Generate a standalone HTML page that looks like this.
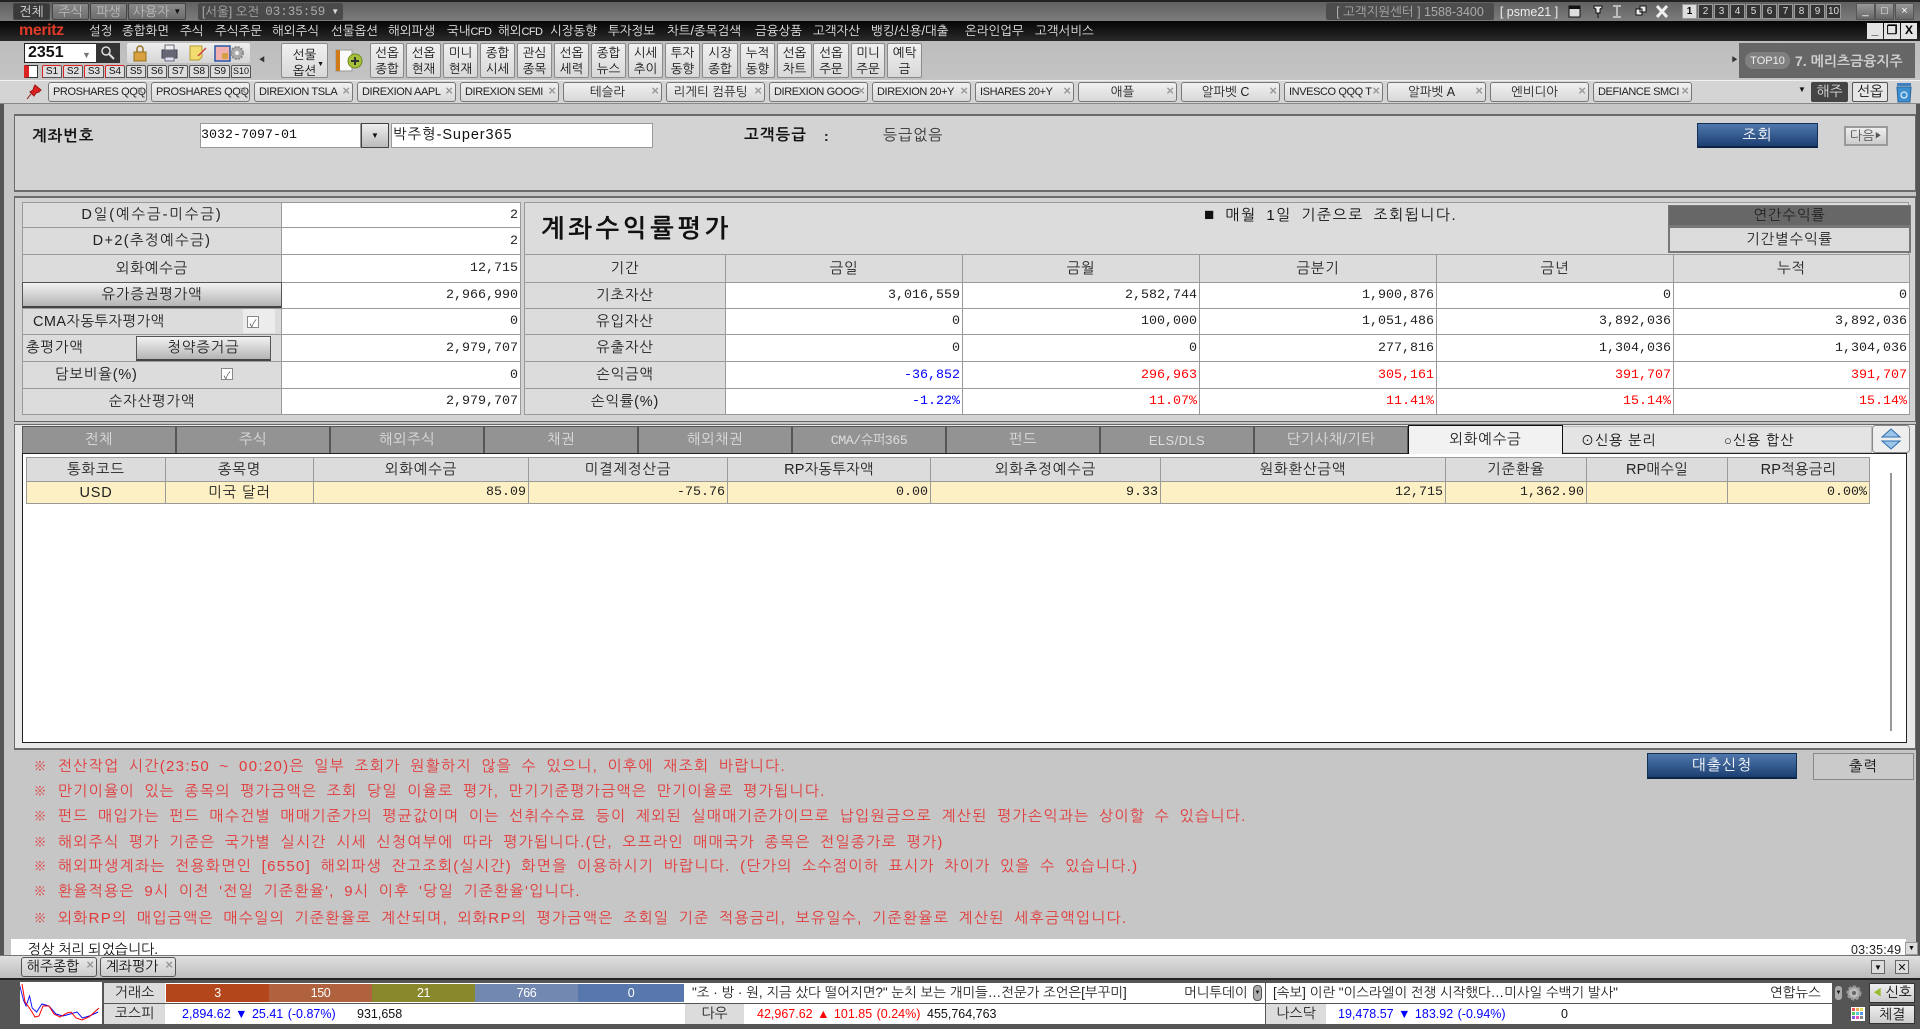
<!DOCTYPE html>
<html lang="ko"><head><meta charset="utf-8"><title>meritz</title>
<style>
*{box-sizing:border-box}
html,body{margin:0;padding:0}
body{width:1920px;height:1029px;overflow:hidden;position:relative;background:#c6c6c6;color:#111;font:13px "Liberation Sans","NanumGothic","Noto Sans CJK KR",sans-serif}
div{position:absolute;white-space:nowrap}
.c{display:flex;align-items:center;justify-content:center}
.m{font-family:"Liberation Mono","NanumGothic","Noto Sans CJK KR",monospace;font-size:13.33px}
.tp{top:3px;height:17px;background:linear-gradient(#8a8a8a,#6d6d6d);border:1px solid #444;border-radius:2px;color:#bbb;font-size:13px}
.mn{top:21px;height:20px;line-height:20px;color:#e6e6e6;font-size:12.5px}
.mn span{font-size:11px;letter-spacing:-.6px}
.tb{top:43px;height:35px;background:linear-gradient(#f0f0f0,#d8d8d8);border:1px solid #8a8a8a;border-radius:2px;text-align:center;font-size:12.5px;line-height:16px;padding-top:1px;color:#111}
.s{top:65px;width:20px;height:13px;background:#ddd;border:1px solid #555;border-radius:2px 2px 0 0;font-size:10px;line-height:11px;text-align:center}
.s.r{border-color:#d22 #555 #555 #d22;border-top:1px solid #d22}
.bk{top:82px;width:99px;height:20px;background:linear-gradient(#f1f1f1,#d8d8d8);border:1px solid #777;border-radius:3px;line-height:18px;font-size:11px;letter-spacing:-.4px;padding-left:4px;color:#222}
.bk.k{text-align:center;padding-right:14px;font-size:12.5px;letter-spacing:0}
.bk:after,.x:after{content:"×";position:absolute;right:2px;top:-1px;color:#999;font-size:13px;font-weight:bold;letter-spacing:0}
.num{top:4px;width:15px;height:15px;background:#333;border:1px solid #999;color:#ddd;font-size:10px;text-align:center;line-height:13px}
.win{top:3px;width:19px;height:17px;background:linear-gradient(#999,#666);border:1px solid #555;color:#fff;font-size:11px;text-align:center;line-height:14px}
.mdi{top:23px;width:16px;height:16px;background:#e4e4e4;color:#000;font-weight:bold;font-size:12px;text-align:center;line-height:15px}
table{position:absolute;border-collapse:collapse;table-layout:fixed;font-size:14.5px}
td{border:1px solid #9a9a9a;padding:0 2px;white-space:nowrap;overflow:hidden}
td.l{background:#dcdcdc;text-align:center;color:#222;letter-spacing:.8px}
td.v{background:#fff;text-align:right;font-family:"Liberation Mono",monospace;font-size:13.33px;color:#222}
.red{color:#f00!important}.blu{color:#00f!important}
.btn{background:linear-gradient(#f2f2f2,#b4b4b4);border:1px solid #555;border-bottom:2px solid #444;display:flex;align-items:center;justify-content:center;font-size:14.5px;color:#222;letter-spacing:.8px}
.blue{background:linear-gradient(#5078ad,#1c3f72);border:1px solid #123058;border-bottom:2px solid #0c2446;color:#fff;display:flex;align-items:center;justify-content:center;font-size:15px;letter-spacing:1px}
.t{top:426px;width:154px;height:27px;background:#939393;border:1px solid #555;border-bottom:none;color:#ddd;font-size:14.5px;letter-spacing:.4px;display:flex;align-items:center;justify-content:center}
.g td{font-size:14.5px;letter-spacing:.8px}
.g td.h{background:#dcdcdc;text-align:center;color:#222}
.g td.y{background:#fdf0c4;color:#222}
.g td.r{text-align:right;font-family:"Liberation Mono",monospace;font-size:13.33px;letter-spacing:0}
.g td.ce{text-align:center}
.nt{left:33px;color:#e23a3a;font-size:15px;letter-spacing:1.3px;height:20px;line-height:20px;word-spacing:4px}
.sg{top:984px;height:18px;color:#fff;font-size:12.5px;letter-spacing:-.4px;display:flex;align-items:center;justify-content:center}
.lb{background:#dcdcdc;display:flex;align-items:center;justify-content:center;font-size:14px;color:#222}
.vl{font-size:12.5px;line-height:20px;height:20px;word-spacing:1px}
.nw{font-size:13.5px;line-height:20px;height:20px;color:#222;top:983px}
</style></head><body>

<!-- title bar -->
<div style="left:0;top:0;width:1920px;height:21px;background:linear-gradient(#5e5e5e,#7c7c7c)"></div>
<div style="left:0;top:0;width:1920px;height:2px;background:#222"></div>
<div class="tp c" style="left:13px;width:37px;background:#3a3a3a;color:#ddd">전체</div>
<div class="tp c" style="left:52px;width:37px">주식</div>
<div class="tp c" style="left:90px;width:37px">파생</div>
<div class="tp c" style="left:128px;width:58px">사용자 <span style="font-size:8px;margin-left:4px;color:#111">▼</span></div>
<div class="c" style="left:198px;top:3px;width:145px;height:17px;background:#4a4a4a;border-radius:2px;color:#aaa;font-size:12.5px">[서울] 오전 <span class="m" style="margin:0 6px;font-size:12.5px">03:35:59</span><span style="font-size:8px;color:#ddd">▼</span></div>
<div class="c" style="left:1326px;top:3px;width:168px;height:17px;background:#4d4d4d;border-radius:2px;color:#aaa;font-size:12.5px">[ 고객지원센터 ] 1588-3400</div>
<div class="c" style="left:1498px;top:3px;width:62px;height:17px;color:#eee;font-size:12.5px">[ psme21 ]</div>
<svg style="position:absolute;left:1566px;top:4px" width="102" height="15" viewBox="0 0 102 15"><rect x="3" y="2" width="11" height="11" fill="#ddd" stroke="#111"/><rect x="3" y="2" width="11" height="3" fill="#111"/><path d="M28 2h8v2l-2 1v4h-4v-4l-2-1zM32 9v5" fill="#eee" stroke="#111"/><path d="M47 2h8M47 13h8M51 2v11" stroke="#bbb" stroke-width="2" fill="none"/><path d="M70 5h6v6h-6zM74 2h6v6h-6z" fill="#eee" stroke="#111"/><path d="M91 2l10 11M101 2l-10 11" stroke="#eee" stroke-width="3"/></svg>
<div class="num" style="left:1682px;background:#ddd;color:#000;font-weight:bold">1</div><div class="num" style="left:1698px">2</div><div class="num" style="left:1714px">3</div><div class="num" style="left:1730px">4</div><div class="num" style="left:1746px">5</div><div class="num" style="left:1762px">6</div><div class="num" style="left:1778px">7</div><div class="num" style="left:1794px">8</div><div class="num" style="left:1810px">9</div><div class="num" style="left:1826px">10</div>
<div class="win" style="left:1856px">_</div><div class="win" style="left:1875px">□</div><div class="win" style="left:1895px">×</div>

<!-- menu -->
<div style="left:0;top:21px;width:1920px;height:20px;background:linear-gradient(#050505,#2a2a2a)"></div>
<div style="left:19px;top:20px;height:20px;line-height:21px;color:#e03a28;font:bold 16px/21px 'Liberation Sans',sans-serif;letter-spacing:-.4px">meritz</div>
<div class="mn" style="left:89px">설정</div><div class="mn" style="left:122px">종합화면</div><div class="mn" style="left:180px">주식</div><div class="mn" style="left:215px">주식주문</div><div class="mn" style="left:272px">해외주식</div><div class="mn" style="left:331px">선물옵션</div><div class="mn" style="left:388px">해외파생</div><div class="mn" style="left:447px">국내<span>CFD</span></div><div class="mn" style="left:498px">해외<span>CFD</span></div><div class="mn" style="left:550px">시장동향</div><div class="mn" style="left:608px">투자정보</div><div class="mn" style="left:667px">차트/종목검색</div><div class="mn" style="left:755px">금융상품</div><div class="mn" style="left:813px">고객자산</div><div class="mn" style="left:871px">뱅킹/신용/대출</div><div class="mn" style="left:965px">온라인업무</div><div class="mn" style="left:1035px">고객서비스</div>
<div class="mdi" style="left:1867px">_</div><div class="mdi" style="left:1884px">❐</div><div class="mdi" style="left:1901px">X</div>

<!-- toolbar -->
<div style="left:0;top:41px;width:1920px;height:39px;background:linear-gradient(#bdbdbd,#c4c4c4)"></div>
<div style="left:24px;top:43px;width:96px;height:20px;background:#fff;border:1px solid #222;font:bold 16px/18px 'Liberation Sans',sans-serif;padding-left:3px">2351</div>
<div style="left:82px;top:50px;color:#777;font-size:9px">▼</div>
<div style="left:96px;top:43px;width:24px;height:20px;background:#333"></div>
<svg style="position:absolute;left:100px;top:45px" width="16" height="16" viewBox="0 0 16 16"><circle cx="6" cy="6" r="4" fill="none" stroke="#ddd" stroke-width="1.5"/><path d="M9 9l5 5" stroke="#ddd" stroke-width="2"/></svg>
<div style="left:127px;top:43px;width:123px;height:20px;background:linear-gradient(#eee,#d5d5d5);border-radius:2px"></div>
<svg style="position:absolute;left:132px;top:44px" width="112" height="18" viewBox="0 0 112 18"><rect x="2" y="8" width="12" height="9" fill="#d8a040" stroke="#96701c"/><path d="M5 8V5a3 3 0 0 1 6 0v3" fill="none" stroke="#96701c" stroke-width="1.5"/><rect x="30" y="6" width="15" height="8" fill="#667" stroke="#445"/><rect x="33" y="1" width="9" height="5" fill="#eee" stroke="#667"/><rect x="33" y="13" width="9" height="4" fill="#dde" stroke="#667"/><path d="M58 2h12v11l-3 3h-9z" fill="#f1dc70" stroke="#b69a30"/><path d="M66 12l8-8" stroke="#c44" stroke-width="1.5"/><rect x="83" y="2" width="15" height="15" fill="#f0b0b0" stroke="#2458a8" stroke-width="1.5"/><rect x="90" y="9" width="6" height="6" fill="#d8a040"/><circle cx="105" cy="9" r="6" fill="#aaa" stroke="#888" stroke-dasharray="2 1.2" stroke-width="2"/><circle cx="105" cy="9" r="2" fill="#eee"/></svg>
<div style="left:24px;top:65px;width:14px;height:13px;background:#fff;border:1px solid #333;border-left:5px solid #d22"></div>
<div class="s r" style="left:42px">S1</div><div class="s r" style="left:63px">S2</div><div class="s r" style="left:84px">S3</div><div class="s r" style="left:105px">S4</div><div class="s" style="left:126px">S5</div><div class="s" style="left:147px">S6</div><div class="s" style="left:168px">S7</div><div class="s" style="left:189px">S8</div><div class="s" style="left:210px">S9</div><div class="s" style="left:231px;font-size:9px">S10</div>
<div style="left:258px;top:55px;font-size:8px;color:#333">◀</div>
<div class="tb" style="left:281px;width:47px;padding-top:3px">선물<br>옵션<span style="position:absolute;right:3px;top:13px;font-size:7px">▼</span></div>
<svg style="position:absolute;left:335px;top:49px" width="28" height="24" viewBox="0 0 28 24"><path d="M1 1h16v21H1z" fill="#fafafa" stroke="#999"/><rect x="1" y="1" width="4" height="21" fill="#d07a18"/><circle cx="20" cy="12" r="7" fill="#a5c23a" stroke="#6f8a1c"/><path d="M20 8v8M16 12h8" stroke="#333" stroke-width="2"/></svg>
<div class="tb" style="left:370px;width:34px">선옵<br>종합</div><div class="tb" style="left:406px;width:35px">선옵<br>현재</div><div class="tb" style="left:443px;width:35px">미니<br>현재</div><div class="tb" style="left:480px;width:35px">종합<br>시세</div><div class="tb" style="left:517px;width:35px">관심<br>종목</div><div class="tb" style="left:554px;width:35px">선옵<br>세력</div><div class="tb" style="left:591px;width:35px">종합<br>뉴스</div><div class="tb" style="left:628px;width:35px">시세<br>추이</div><div class="tb" style="left:665px;width:35px">투자<br>동향</div><div class="tb" style="left:702px;width:36px">시장<br>종합</div><div class="tb" style="left:740px;width:35px">누적<br>동향</div><div class="tb" style="left:777px;width:35px">선옵<br>차트</div><div class="tb" style="left:813px;width:36px">선옵<br>주문</div><div class="tb" style="left:851px;width:34px">미니<br>주문</div><div class="tb" style="left:887px;width:35px">예탁<br>금</div>
<div style="left:1731px;top:55px;font-size:8px;color:#333">▶</div>
<div style="left:1739px;top:43px;width:176px;height:35px;background:#666"></div>
<div class="c" style="left:1745px;top:52px;width:45px;height:17px;background:#808080;border-radius:8px;color:#eee;font-size:11px">TOP10</div>
<div style="left:1795px;top:51px;height:20px;line-height:20px;color:#d0d0d0;font-weight:bold;font-size:14px">7. 메리츠금융지주</div>

<!-- bookmarks -->
<div style="left:0;top:80px;width:1920px;height:24px;background:#d4d4d4;border-top:1px solid #f0f0f0;border-bottom:1px solid #888"></div>
<svg style="position:absolute;left:26px;top:84px" width="16" height="16" viewBox="0 0 16 16"><path d="M9 1l6 5-2 2-3 1-2 3-4-4 3-2 1-3zM5 10l-4 5" fill="#d22" stroke="#911"/></svg>
<div class="bk" style="left:48px">PROSHARES QQQ</div><div class="bk" style="left:151px">PROSHARES QQQ</div><div class="bk" style="left:254px">DIREXION TSLA</div><div class="bk" style="left:357px">DIREXION AAPL</div><div class="bk" style="left:460px">DIREXION SEMI</div><div class="bk k" style="left:563px">테슬라</div><div class="bk k" style="left:666px">리게티 컴퓨팅</div><div class="bk" style="left:769px">DIREXION GOOG</div><div class="bk" style="left:872px">DIREXION 20+Y</div><div class="bk" style="left:975px">ISHARES 20+Y</div><div class="bk k" style="left:1078px">애플</div><div class="bk k" style="left:1181px">알파벳 C</div><div class="bk" style="left:1284px">INVESCO QQQ T</div><div class="bk k" style="left:1387px">알파벳 A</div><div class="bk k" style="left:1490px">엔비디아</div><div class="bk" style="left:1593px">DEFIANCE SMCI</div>
<div style="left:1798px;top:85px;font-size:8px">▼</div>
<div class="c" style="left:1811px;top:82px;width:37px;height:20px;background:#444;color:#ddd;font-size:14px;border-radius:2px">해주</div>
<div class="c" style="left:1852px;top:82px;width:36px;height:20px;background:#e6e6e6;border:1px solid #555;font-size:14px;border-radius:2px">선옵</div>
<svg style="position:absolute;left:1894px;top:82px" width="24" height="21" viewBox="0 0 24 21"><rect x="3" y="1" width="14" height="3" fill="#3d7fc0"/><path d="M3 5h14l-1 15H4z" fill="#3d8fd0" stroke="#26649a"/><circle cx="10" cy="13" r="3" fill="none" stroke="#fff"/></svg>

<!-- frame -->
<div style="left:0;top:104px;width:4px;height:874px;background:#555"></div>
<div style="right:0;top:104px;width:4px;height:874px;background:#555"></div>

<!-- panel 1 -->
<div style="left:14px;top:114px;width:1902px;height:78px;background:#d3d3d3;border:2px solid #6a6a6a;border-width:2px 1px 2px 1px"></div>
<div style="left:32px;top:127px;height:20px;line-height:20px;font-weight:bold;font-size:15.5px;letter-spacing:1px">계좌번호</div>
<div class="m" style="left:200px;top:123px;width:161px;height:25px;background:#fff;border:1px solid #999;line-height:23px">3032-7097-01</div>
<div class="c" style="left:361px;top:123px;width:28px;height:25px;background:linear-gradient(#eee,#bbb);border:1px solid #444;font-size:8px">▼</div>
<div style="left:391px;top:123px;width:262px;height:25px;background:#fff;border:1px solid #999;line-height:23px;font-size:14.5px;padding-left:1px;letter-spacing:.9px">박주형-Super365</div>
<div style="left:744px;top:126px;height:20px;line-height:20px;font-weight:bold;font-size:15.5px;letter-spacing:1.2px">고객등급</div>
<div style="left:824px;top:126px;height:20px;line-height:20px;font-weight:bold;font-size:14px">:</div>
<div style="left:883px;top:126px;height:20px;line-height:20px;font-size:15px;letter-spacing:1px;color:#333">등급없음</div>
<div class="blue" style="left:1697px;top:123px;width:121px;height:25px">조회</div>
<div class="c" style="left:1844px;top:126px;width:44px;height:20px;background:linear-gradient(#eee,#ccc);border:2px solid #999;font-size:13px;color:#555">다음<span style="font-size:8px">▶</span></div>

<!-- panel 2 -->
<div style="left:14px;top:196px;width:1902px;height:226px;background:#d3d3d3;border:1px solid #6a6a6a;border-top-width:2px"></div>
<table style="left:22px;top:202px;width:498px"><colgroup><col style="width:259px"><col style="width:239px"></colgroup>
<tr style="height:25px"><td class="l" style="letter-spacing:1.9px">D일(예수금-미수금)</td><td class="v">2</td></tr>
<tr style="height:27px"><td class="l" style="letter-spacing:1.4px">D+2(추정예수금)</td><td class="v">2</td></tr>
<tr style="height:28px"><td class="l">외화예수금</td><td class="v">12,715</td></tr>
<tr style="height:26px"><td class="l"></td><td class="v">2,966,990</td></tr>
<tr style="height:26px"><td class="l" style="text-align:left;padding-left:10px;letter-spacing:.4px">CMA자동투자평가액</td><td class="v">0</td></tr>
<tr style="height:27px"><td class="l" style="text-align:left;padding-left:3px">총평가액</td><td class="v">2,979,707</td></tr>
<tr style="height:27px"><td class="l" style="text-align:left;padding-left:32px">담보비율(%)</td><td class="v">0</td></tr>
<tr style="height:26px"><td class="l">순자산평가액</td><td class="v">2,979,707</td></tr>
</table>
<div class="btn" style="left:22px;top:282px;width:260px;height:26px">유가증권평가액</div>
<div style="left:243px;top:309px;width:32px;height:24px;background:#ececec"></div>
<div class="c" style="left:247px;top:316px;width:12px;height:12px;background:#fff;border:1px solid #888;color:#555;font-size:10px">✓</div>
<div class="btn" style="left:136px;top:336px;width:135px;height:25px">청약증거금</div>
<div class="c" style="left:221px;top:368px;width:12px;height:12px;background:#fff;border:1px solid #888;color:#555;font-size:10px">✓</div>

<div style="left:524px;top:202px;width:1385px;height:52px;background:#dcdcdc;border:1px solid #9a9a9a;border-bottom:none"></div>
<div style="left:541px;top:214px;height:30px;line-height:30px;font-weight:bold;font-size:25px;letter-spacing:3.8px">계좌수익률평가</div>
<div style="left:1204px;top:205px;height:20px;line-height:20px;font-size:15px;letter-spacing:1.5px;word-spacing:4px"><span style="font-size:17px">■</span> 매월 1일 기준으로 조회됩니다.</div>
<div class="c" style="left:1668px;top:205px;width:243px;height:21px;background:#676767;border:1px solid #777;font-size:14.5px;color:#222;letter-spacing:.8px">연간수익률</div>
<div class="c" style="left:1668px;top:226px;width:243px;height:27px;background:#dcdcdc;border:2px solid #777;font-size:14.5px;color:#222;letter-spacing:.8px">기간별수익률</div>
<table style="left:524px;top:254px;width:1385px"><colgroup><col style="width:201px"><col style="width:237px"><col style="width:237px"><col style="width:237px"><col style="width:237px"><col style="width:236px"></colgroup>
<tr style="height:28px"><td class="l">기간</td><td class="l">금일</td><td class="l">금월</td><td class="l">금분기</td><td class="l">금년</td><td class="l">누적</td></tr>
<tr style="height:26px"><td class="l">기초자산</td><td class="v">3,016,559</td><td class="v">2,582,744</td><td class="v">1,900,876</td><td class="v">0</td><td class="v">0</td></tr>
<tr style="height:26px"><td class="l">유입자산</td><td class="v">0</td><td class="v">100,000</td><td class="v">1,051,486</td><td class="v">3,892,036</td><td class="v">3,892,036</td></tr>
<tr style="height:27px"><td class="l">유출자산</td><td class="v">0</td><td class="v">0</td><td class="v">277,816</td><td class="v">1,304,036</td><td class="v">1,304,036</td></tr>
<tr style="height:27px"><td class="l">손익금액</td><td class="v blu">-36,852</td><td class="v red">296,963</td><td class="v red">305,161</td><td class="v red">391,707</td><td class="v red">391,707</td></tr>
<tr style="height:26px"><td class="l">손익률(%)</td><td class="v blu">-1.22%</td><td class="v red">11.07%</td><td class="v red">11.41%</td><td class="v red">15.14%</td><td class="v red">15.14%</td></tr>
</table>

<!-- panel 3 -->
<div style="left:14px;top:424px;width:1902px;height:326px;background:#e8e8e8;border:2px solid #6a6a6a;border-width:1px 1px 2px 1px"></div>
<div class="t" style="left:22px">전체</div><div class="t" style="left:176px">주식</div><div class="t" style="left:330px">해외주식</div><div class="t" style="left:484px">채권</div><div class="t" style="left:638px">해외채권</div><div class="t m" style="left:792px;font-size:13.33px;letter-spacing:-.5px">CMA/슈퍼365</div><div class="t" style="left:946px">펀드</div><div class="t" style="left:1100px;font-size:13px">ELS/DLS</div><div class="t" style="left:1254px">단기사채/기타</div>
<div style="left:22px;top:453px;width:1885px;height:290px;background:#fff;border:1px solid #222"></div>
<div class="t" style="left:1408px;top:425px;width:155px;height:29px;background:#f2f2f2;color:#222;border-color:#111;letter-spacing:.8px">외화예수금</div>
<div style="left:1563px;top:426px;width:309px;height:27px;background:#e4e4e4;border:1px solid #bbb;border-left:none"></div>
<div style="left:1581px;top:430px;height:20px;line-height:20px;font-size:14px;letter-spacing:1px"><span style="font-size:13px">⊙</span>신용 분리</div>
<div style="left:1724px;top:430px;height:20px;line-height:20px;font-size:14px;letter-spacing:1px"><span style="font-size:13px">○</span>신용 합산</div>
<svg style="position:absolute;left:1872px;top:425px" width="38" height="28" viewBox="0 0 38 28"><rect x=".5" y=".5" width="37" height="27" rx="3" fill="#eee" stroke="#888"/><path d="M19 4l9 8H10z" fill="#9cc4e6" stroke="#2a6eb0"/><path d="M19 24l9-8H10z" fill="#9cc4e6" stroke="#2a6eb0"/></svg>
<table class="g" style="left:26px;top:457px;width:1843px"><colgroup><col style="width:139px"><col style="width:148px"><col style="width:215px"><col style="width:199px"><col style="width:203px"><col style="width:230px"><col style="width:285px"><col style="width:141px"><col style="width:141px"><col style="width:142px"></colgroup>
<tr style="height:24px"><td class="h">통화코드</td><td class="h">종목명</td><td class="h">외화예수금</td><td class="h">미결제정산금</td><td class="h" style="letter-spacing:.2px">RP자동투자액</td><td class="h">외화추정예수금</td><td class="h">원화환산금액</td><td class="h">기준환율</td><td class="h" style="letter-spacing:.2px">RP매수일</td><td class="h" style="letter-spacing:.2px">RP적용금리</td></tr>
<tr style="height:22px"><td class="y ce">USD</td><td class="y ce">미국 달러</td><td class="y r">85.09</td><td class="y r">-75.76</td><td class="y r">0.00</td><td class="y r">9.33</td><td class="y r">12,715</td><td class="y r">1,362.90</td><td class="y r"></td><td class="y r">0.00%</td></tr>
</table>
<div style="left:1890px;top:473px;width:2px;height:258px;background:#999"></div>

<!-- notes -->
<div class="nt" style="top:757px">※ 전산작업 시간(23:50 ~ 00:20)은 일부 조회가 원활하지 않을 수 있으니, 이후에 재조회 바랍니다.</div>
<div class="nt" style="top:782px">※ 만기이율이 있는 종목의 평가금액은 조회 당일 이율로 평가, 만기기준평가금액은 만기이율로 평가됩니다.</div>
<div class="nt" style="top:807px">※ 펀드 매입가는 펀드 매수건별 매매기준가의 평균값이며 이는 선취수수료 등이 제외된 실매매기준가이므로 납입원금으로 계산된 평가손익과는 상이할 수 있습니다.</div>
<div class="nt" style="top:833px">※ 해외주식 평가 기준은 국가별 실시간 시세 신청여부에 따라 평가됩니다.(단, 오프라인 매매국가 종목은 전일종가로 평가)</div>
<div class="nt" style="top:857px">※ 해외파생계좌는 전용화면인 [6550] 해외파생 잔고조회(실시간) 화면을 이용하시기 바랍니다. (단가의 소수점이하 표시가 차이가 있을 수 있습니다.)</div>
<div class="nt" style="top:882px">※ 환율적용은 9시 이전 '전일 기준환율', 9시 이후 '당일 기준환율'입니다.</div>
<div class="nt" style="top:909px">※ 외화RP의 매입금액은 매수일의 기준환율로 계산되며, 외화RP의 평가금액은 조회일 기준 적용금리, 보유일수, 기준환율로 계산된 세후금액입니다.</div>
<div class="blue" style="left:1647px;top:753px;width:150px;height:26px">대출신청</div>
<div class="c" style="left:1813px;top:753px;width:101px;height:27px;border:1px solid #888;font-size:14.5px;background:#cacaca;letter-spacing:1px">출력</div>

<!-- status -->
<div style="left:11px;top:939px;width:1895px;height:16px;background:#fff;overflow:hidden"><div style="left:17px;top:1px;height:18px;line-height:18px;font-size:14px">정상 처리 되었습니다.</div><div style="left:1840px;top:3px;line-height:16px;font-size:12.5px;color:#222;letter-spacing:.2px">03:35:49</div></div>
<div class="c" style="left:1905px;top:942px;width:13px;height:13px;background:#ddd;border:1px solid #999;font-size:7px">▼</div>
<div style="left:0;top:955px;width:1920px;height:23px;background:linear-gradient(#e0e0e0,#bdbdbd);border-top:1px solid #777"></div>
<div class="c x" style="left:21px;top:957px;width:76px;height:20px;background:linear-gradient(#e8e8e8,#ccc);border:1px solid #555;border-radius:3px;font-size:14px;padding-right:12px">해주종합</div>
<div class="c x" style="left:100px;top:957px;width:76px;height:20px;background:linear-gradient(#e8e8e8,#ccc);border:1px solid #555;border-radius:3px;font-size:14px;padding-right:12px">계좌평가</div>
<div class="c" style="left:1871px;top:960px;width:14px;height:14px;background:#ddd;border:1px solid #666;font-size:8px">▼</div>
<div class="c" style="left:1895px;top:960px;width:14px;height:14px;background:#ddd;border:1px solid #666;font-size:11px">✕</div>

<!-- bottom -->
<div style="left:0;top:978px;width:1920px;height:51px;background:#555;border-top:2px solid #222"></div>
<div style="left:20px;top:982px;width:82px;height:42px;background:#fff"></div>
<svg style="position:absolute;left:20px;top:982px" width="82" height="42" viewBox="0 0 82 42"><polyline fill="none" stroke="#00f" points="1,4 5,18 8,24 12,14 15,26 20,30 26,22 34,24 42,32 50,34 58,32 66,30 72,36 80,34 90,30" transform="translate(-1,0) scale(.88 1)"/><polyline fill="none" stroke="#f00" points="2,2 5,20 8,24 12,30 15,35 19,34 23,24 29,24 34,32 40,35 47,31 51,30 56,36 62,38 69,35 79,26"/></svg>
<div class="lb" style="left:104px;top:983px;width:61px;height:20px">거래소</div>
<div class="lb" style="left:104px;top:1004px;width:61px;height:20px">코스피</div>
<div style="left:165px;top:983px;width:520px;height:20px;background:#fff"></div>
<div style="left:165px;top:1004px;width:520px;height:20px;background:#fff"></div>
<div class="sg" style="left:166px;width:103px;background:#b4461b">3</div><div class="sg" style="left:269px;width:103px;background:#b0623f">150</div><div class="sg" style="left:372px;width:103px;background:#8a882d">21</div><div class="sg" style="left:475px;width:103px;background:#7288b1">766</div><div class="sg" style="left:578px;width:106px;background:#5777ad">0</div>
<div class="vl" style="left:182px;top:1004px;color:#00f">2,894.62 ▼ 25.41 (-0.87%)</div>
<div class="vl" style="left:357px;top:1004px">931,658</div>
<div style="left:685px;top:983px;width:580px;height:20px;background:#fff"></div>
<div class="nw" style="left:692px">"조 · 방 · 원, 지금 샀다 떨어지면?" 눈치 보는 개미들…전문가 조언은[부꾸미]</div>
<div class="nw" style="left:1184px">머니투데이</div>
<div class="c" style="left:1253px;top:985px;width:9px;height:16px;background:#aaa;border:1px solid #555;border-radius:4px;font-size:6px">▼</div>
<div style="left:1266px;top:983px;width:566px;height:20px;background:#fff"></div>
<div class="nw" style="left:1273px">[속보] 이란 "이스라엘이 전쟁 시작했다…미사일 수백기 발사"</div>
<div class="nw" style="left:1770px">연합뉴스</div>
<div class="c" style="left:1834px;top:985px;width:9px;height:16px;background:#aaa;border:1px solid #555;border-radius:4px;font-size:6px">▼</div>
<div class="lb" style="left:685px;top:1004px;width:59px;height:20px">다우</div>
<div style="left:744px;top:1004px;width:521px;height:20px;background:#fff"></div>
<div class="vl" style="left:757px;top:1004px;color:#f00">42,967.62 ▲ 101.85 (0.24%)</div>
<div class="vl" style="left:927px;top:1004px">455,764,763</div>
<div class="lb" style="left:1266px;top:1004px;width:60px;height:20px">나스닥</div>
<div style="left:1326px;top:1004px;width:506px;height:20px;background:#fff"></div>
<div class="vl" style="left:1338px;top:1004px;color:#00f">19,478.57 ▼ 183.92 (-0.94%)</div>
<div class="vl" style="left:1561px;top:1004px">0</div>
<svg style="position:absolute;left:1845px;top:984px" width="18" height="18" viewBox="0 0 18 18"><circle cx="9" cy="9" r="6" fill="#bbb" stroke="#999" stroke-width="3" stroke-dasharray="3 1.5"/><circle cx="9" cy="9" r="2" fill="#666"/></svg>
<div class="c" style="left:1869px;top:983px;width:46px;height:20px;background:linear-gradient(#eee,#ccc);border:1px solid #333;font-size:14px"><span style="color:#9b3;margin-right:3px;font-size:11px">◀</span>신호</div>
<svg style="position:absolute;left:1851px;top:1007px" width="14" height="14" viewBox="0 0 14 14"><rect width="14" height="14" fill="#fff"/><rect x="1" y="1" width="3" height="3" fill="#e55"/><rect x="5" y="1" width="3" height="3" fill="#ea5"/><rect x="9" y="1" width="3" height="3" fill="#dd5"/><rect x="1" y="5" width="3" height="3" fill="#5c5"/><rect x="5" y="5" width="3" height="3" fill="#5cc"/><rect x="9" y="5" width="3" height="3" fill="#59e"/><rect x="1" y="9" width="3" height="3" fill="#85e"/><rect x="5" y="9" width="3" height="3" fill="#e5b"/><rect x="9" y="9" width="3" height="3" fill="#888"/></svg>
<div class="c" style="left:1869px;top:1005px;width:46px;height:19px;background:linear-gradient(#eee,#ccc);border:1px solid #333;font-size:14px">체결</div>
</body></html>
